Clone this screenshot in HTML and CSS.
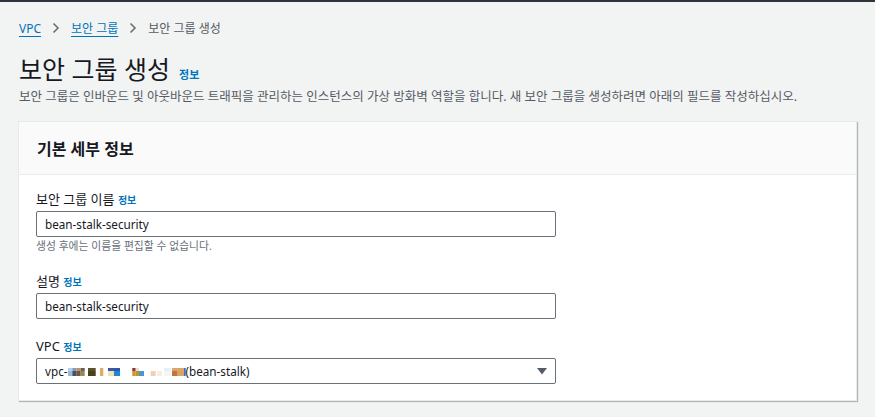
FILE: index.html
```html
<!DOCTYPE html>
<html lang="ko">
<head>
<meta charset="utf-8">
<title>보안 그룹 생성</title>
<link rel="stylesheet" href="styles.css">
</head>
<body>
<div class="topline"></div>
<main class="page">
  <nav class="crumbs">
    <a class="crumb-link" href="#">VPC</a>
    <svg class="chev" width="8" height="12" viewBox="0 0 8 12"><path d="M1.5 1.5 L6 6 L1.5 10.5" fill="none" stroke="#687078" stroke-width="1.6"/></svg>
    <a class="crumb-link" href="#">보안 그룹</a>
    <svg class="chev" width="8" height="12" viewBox="0 0 8 12"><path d="M1.5 1.5 L6 6 L1.5 10.5" fill="none" stroke="#687078" stroke-width="1.6"/></svg>
    <span class="crumb-current">보안 그룹 생성</span>
  </nav>
  <header class="title-row">
    <h1 class="title">보안 그룹 생성</h1>
    <a class="info info-title" href="#">정보</a>
  </header>
  <p class="desc">보안 그룹은 인바운드 및 아웃바운드 트래픽을 관리하는 인스턴스의 가상 방화벽 역할을 합니다. 새 보안 그룹을 생성하려면 아래의 필드를 작성하십시오.</p>

  <section class="card">
    <div class="card-head">기본 세부 정보</div>
    <div class="card-body">
      <div class="field">
        <div class="label">보안 그룹 이름 <a class="info" href="#">정보</a></div>
        <div class="input">bean-stalk-security</div>
        <div class="hint">생성 후에는 이름을 편집할 수 없습니다.</div>
      </div>
      <div class="field">
        <div class="label">설명 <a class="info" href="#">정보</a></div>
        <div class="input">bean-stalk-security</div>
      </div>
      <div class="field">
        <div class="label">VPC <a class="info" href="#">정보</a></div>
        <div class="input select">
          <span class="vpc">vpc-<svg class="blur" width="118" height="8" viewBox="0 0 118 8">
            <rect x="0" y="0" width="4.3" height="3" fill="#b4d0ec"/>
            <rect x="0" y="3" width="4.3" height="5" fill="#9ab8d6"/>
            <rect x="4.3" y="0" width="4.4" height="3" fill="#7d9fc4"/>
            <rect x="4.3" y="3" width="4.4" height="5" fill="#4a5060"/>
            <rect x="8.7" y="0" width="4" height="3" fill="#c69060"/>
            <rect x="8.7" y="3" width="4" height="5" fill="#6a5a48"/>
            <rect x="12.7" y="0" width="4" height="3" fill="#6a6058"/>
            <rect x="12.7" y="3" width="4" height="5" fill="#9a8a50"/>
            <rect x="20" y="0" width="7.7" height="3" fill="#5c5228"/>
            <rect x="20" y="3" width="7.7" height="5" fill="#4a4020"/>
            <rect x="32" y="0" width="3.3" height="8" fill="#e2aa66"/>
            <rect x="40" y="0" width="6" height="3" fill="#3a5aa8"/>
            <rect x="40" y="3" width="6" height="5" fill="#f2e2b8"/>
            <rect x="46" y="0" width="6" height="3" fill="#2f56a8"/>
            <rect x="46" y="3" width="6" height="5" fill="#2288cc"/>
            <rect x="64.3" y="0" width="3.4" height="3" fill="#8e3434"/>
            <rect x="64.3" y="3" width="3.4" height="5" fill="#c8963c"/>
            <rect x="67.7" y="0" width="3.3" height="3" fill="#e8dcd0"/>
            <rect x="67.7" y="3" width="3.3" height="5" fill="#c89020"/>
            <rect x="71" y="3" width="5" height="5" fill="#4a96d4"/>
            <rect x="82.7" y="3" width="5" height="5" fill="#f0d2b0"/>
            <rect x="89" y="3" width="5" height="5" fill="#f8ece4"/>
            <rect x="96" y="0" width="7" height="3" fill="#e2f2fa"/>
            <rect x="96" y="3" width="7" height="5" fill="#f6f6f0"/>
            <rect x="104" y="0" width="12" height="3" fill="#dca466"/>
            <rect x="104" y="3" width="5" height="5" fill="#c07444"/>
            <rect x="109" y="3" width="7" height="5" fill="#d8a462"/>
            <rect x="116" y="0" width="1.7" height="8" fill="#3a70c0"/>
          </svg>(bean-stalk)</span>
          <svg class="caret" width="10" height="7" viewBox="0 0 10 7"><path d="M0 0 H10 L5 6.5 Z" fill="#545b64"/></svg>
        </div>
      </div>
    </div>
  </section>
</main>
</body>
</html>
```

FILE: styles.css
```css
html, body {
  margin: 0;
  padding: 0;
}
body {
  background: #f2f3f3;
  font-family: "Noto Sans", "Noto Sans CJK KR", "Liberation Sans", sans-serif;
  color: #16191f;
  width: 875px;
  height: 417px;
  overflow: hidden;
}
.topline {
  height: 2px;
  background: #2e343c;
}
.page {
  padding: 0 18px 0 18px;
}
.crumbs {
  display: flex;
  align-items: center;
  gap: 11px;
  padding: 16px 0 0 1px;
  height: 20px;
  font-size: 12px;
}
.crumb-link {
  color: #0073bb;
  text-decoration: underline;
  text-underline-offset: 3px;
}
.crumb-current {
  color: #545b64;
}
.title-row {
  display: flex;
  align-items: baseline;
  gap: 9px;
  margin-top: 15px;
  padding-left: 1px;
}
.title {
  margin: 0;
  font-size: 25px;
  font-weight: 400;
  line-height: 32px;
  color: #16191f;
}
.info {
  color: #0073bb;
  font-size: 10px;
  font-weight: 700;
  text-decoration: none;
}
.info-title {
  font-size: 11px;
}
.desc {
  margin: 3px 0 0 0;
  padding-left: 1px;
  font-size: 12.5px;
  line-height: 18px;
  color: #545b64;
}
.card {
  margin-top: 15px;
  background: #fff;
  border: 1px solid #e8eaea;
  box-shadow: 1px 1px 1px rgba(0, 0, 0, 0.25);
  width: 837px;
}
.card-head {
  background: #fafafa;
  border-bottom: 1px solid #eaeded;
  height: 52px;
  display: flex;
  align-items: center;
  padding-left: 18px;
  font-size: 16px;
  font-weight: 700;
}
.card-body {
  padding: 14px 17px 16px 17px;
  display: flex;
  flex-direction: column;
  gap: 17px;
}
.field {
  display: flex;
  flex-direction: column;
}
.label {
  font-size: 13px;
  line-height: 20px;
  margin-bottom: 1px;
}
.label .info {
  font-size: 10px;
}
.input {
  box-sizing: border-box;
  width: 520px;
  height: 26px;
  border: 1px solid #687078;
  border-radius: 2px;
  padding: 0 8px;
  display: flex;
  align-items: center;
  font-size: 11.7px;
  background: #fff;
}
.hint {
  font-size: 10.8px;
  color: #687078;
  line-height: 16px;
  margin-top: 1px;
}
.select {
  justify-content: space-between;
}
.vpc {
  display: flex;
  align-items: center;
}
.blur {
  margin-top: 2px;
}
.caret {
  margin-right: 0;
}
```
